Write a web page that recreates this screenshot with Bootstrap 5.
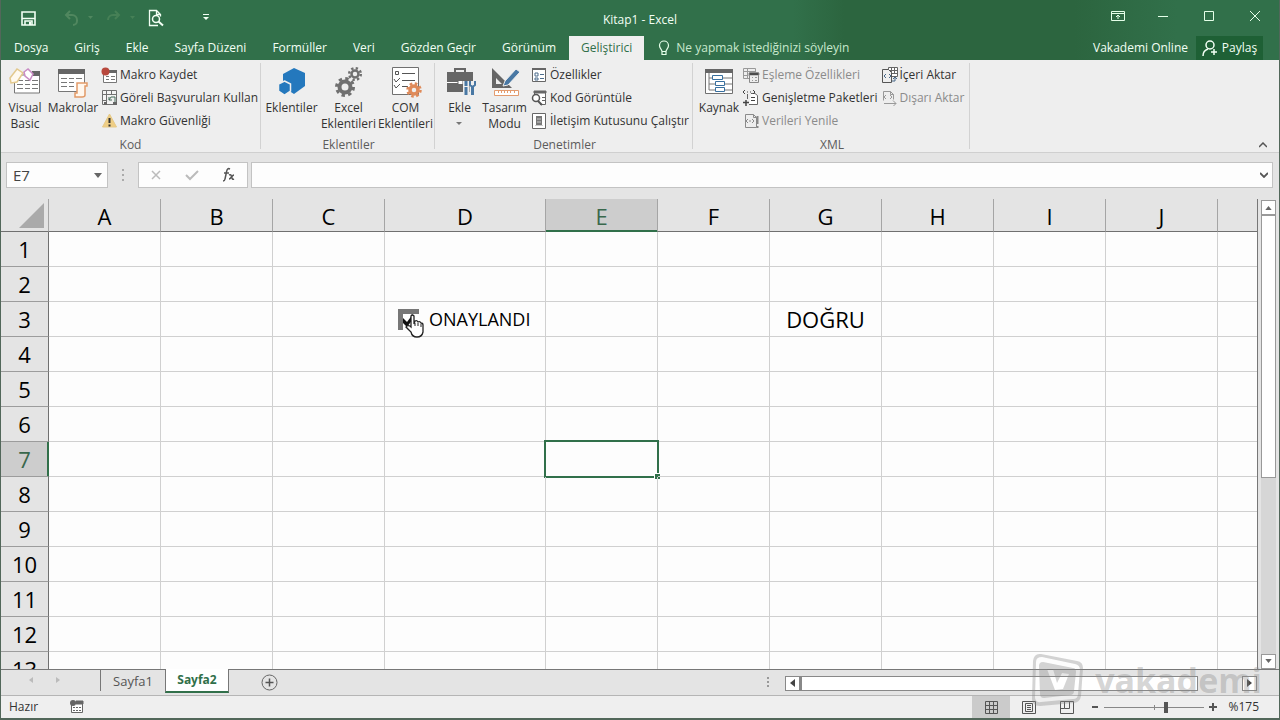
<!DOCTYPE html>
<html lang="tr">
<head>
<meta charset="utf-8">
<meta name="viewport" content="width=device-width, initial-scale=1">
<title>Kitap1 - Excel</title>
<link href="https://cdn.jsdelivr.net/npm/bootstrap@5.3.0/dist/css/bootstrap.min.css" rel="stylesheet">
<style>
:root{--green:#31704a;--line:#d0d0d0;--chrome:#e4e4e4}
body{font-family:"Open Sans","Noto Sans",sans-serif;font-size:12px;line-height:16px;color:#333;background:var(--chrome);height:100vh;overflow:hidden}
button{border:0;background:none;padding:0;color:inherit}
svg{display:block;flex:none}
.window{height:100vh;border:solid #52675a;border-width:0 1px 2px}
.titlebar{background:linear-gradient(90deg,#31704a 62%,#2c653f 66%,#2c653f 84%,#31704a 92%);color:#f2fff4}
.titlerow{height:36px;display:grid;grid-template-columns:1fr auto 1fr}
.quick{gap:28px;padding-left:20px}
.pull{margin-left:-16px}
.winbtns{gap:30px;padding-right:16px}
.menu{height:24px}
.menu-tab{height:24px;padding:0 13px}
.menu-tab.current{background:#efefef;color:var(--green);padding:0 12px}
.tell{gap:6px;padding-left:14px;color:#c8e8cd}
.share{background:#1e6035;height:24px;width:67px;gap:4px}
.ribbon{background:#eee;height:93px;border-bottom:1px solid #cfcfcf}
.group{border-right:1px solid #d2d2d2;padding:3px 0 0 2px;margin:3px 0}
.g-code{width:260px;padding-left:0}.g-addin{width:174px}.g-ctrl{width:258px}.g-xml{width:277px}
.group-body{height:72px;padding-bottom:2px}
.group-name{color:#5c5c5c;text-align:center;line-height:14px}
.big{width:48px;white-space:nowrap;gap:2px}
.big.wide{width:57px}.big.slim{width:45px}
.small-col{margin-left:4px}
.small-cmd{height:23px;gap:2px;padding-bottom:5px;white-space:nowrap}
.dim{color:#8b8b8b}
.formula{height:46px;padding:9px 6px 11px 5px}
.box{background:#fdfdfd;border:1px solid #c3c3c3;height:26px}
.namebox{width:102px}
.box input{border:0;background:transparent;outline:0;min-width:0;width:100%;color:#444;font-size:15px;line-height:20px;padding:0 6px}
.grip{width:30px}
.fx{width:110px;margin-right:3px}
.sheet{min-height:0}
.gridarea{overflow:hidden;min-width:0;border-right:1px solid #777;background:#fdfdfd}
.cells{table-layout:fixed;border-collapse:separate;border-spacing:0;width:100%;color:#000;font-size:22px;line-height:30px}
.cells th{background:var(--chrome);font-weight:400;text-align:center;padding:0}
.cells thead th{height:33px;line-height:30px;border-bottom:1px solid #707070;border-right:1px solid #a5a5a5;padding-top:2px}
.cells tbody th{height:35px;border-bottom:1px solid #9c9c9c;border-right:1px solid #707070}
.cells td{height:35px;padding:0;border-right:1px solid var(--line);border-bottom:1px solid var(--line);text-align:center;position:relative;white-space:nowrap}
.cells th:last-child,.cells td:last-child{border-right:0}
.cells thead th.on{background:#cdcdcd;color:#39684c;border-bottom-color:var(--green);box-shadow:inset 0 -1px var(--green)}
.cells tbody th.on{background:#cdcdcd;color:#39684c;border-right-color:var(--green);box-shadow:inset -1px 0 var(--green)}
.c-head{width:48px}.c-std{width:112px}.c-mid{width:161px}
.corner svg{margin:0 3px 0 auto}
.picked{position:absolute;inset:-2px;border:2px solid var(--green)}
.picked::after{content:"";position:absolute;right:-3px;bottom:-3px;width:6px;height:6px;background:var(--green);border:solid #fff;border-width:1px 0 0 1px}
.approve{padding-left:13px;font-size:18px;gap:10px;line-height:24px}
.approve input{appearance:none;width:21px;height:21px;margin:0;border:solid #777;border-width:5px 0 0 5px;background:#fff}
.tickbox{position:relative;display:flex}
.tickbox svg{position:absolute;left:4px;top:2px}
.vscroll{width:22px;padding:1px 3px 0 3px}
.sbtn{width:15px;height:15px;background:#fff;border:1px solid #999;display:grid;place-items:center}
.vtrack{background:#d6d6d6;width:15px}
.vthumb{background:#fff;border:1px solid #999;height:60%}
.tabs{height:28px;border-top:1px solid #777;border-bottom:1px solid #b5b5b5}
.sheet-nav{width:100px;gap:22px;border-right:1px solid #777;margin-bottom:4px;padding-right:12px}
.sheet-tab{width:64px;color:#555;font-size:13px;margin-bottom:2px}
.sheet-tab.current{background:#fff;color:var(--green);font-weight:700;font-size:12px;border:solid #777;border-width:0 1px;border-bottom:2px solid var(--green);margin-top:-1px}
.add{margin-left:32px}
.hscroll{width:472px;height:15px;margin:6px 22px 0 0}
.hscroll .sbtn{border-color:#888}
.hthumb{flex:0 1 398px;background:#fff;border:1px solid #888;border-left-width:2px}
.status{height:22px;background:#efefef}
.macro-ico{margin-left:32px}
.view{width:38px;height:22px;display:grid;place-items:center}
.view.current{background:#cbcbcb}
.zoomer{width:100px;height:16px;margin:0 4px}
.zoomer input{appearance:none;width:100%;height:16px;margin:0;background:linear-gradient(#888,#888) 0 8px/100% 1px no-repeat,linear-gradient(#888,#888) 50% 6px/1px 5px no-repeat;display:block}
.zoomer input::-webkit-slider-thumb{appearance:none;width:4px;height:11px;background:#555}
.percent{padding:0 20px 0 10px}
.brandmark{position:absolute;right:18px;bottom:13px;z-index:5;color:#8888885c;font-size:34px;line-height:28px;font-weight:700;gap:10px;pointer-events:none}
</style>
</head>
<body>
<svg width="0" height="0" class="position-absolute" aria-hidden="true">
  <symbol id="xmlfile" viewBox="0 0 16 16"><path d="M2.500 1.500h8l3 3v10h-11z" fill="none" stroke="currentColor"/><path d="M10.500 1.500v3h3M5 6L3 8l2 2m4-4 2 2-2 2M7 7v2" fill="none" stroke="currentColor"/></symbol>
</svg>
<div class="window d-flex flex-column">
  <header class="titlebar">
    <div class="titlerow">
      <div class="quick d-flex align-items-center">
        <button aria-label="Kaydet"><svg width="15" height="15" viewBox="0 0 15 15"><path d="M1 1h13v13H1z" fill="none" stroke="#f2fff4" stroke-width="1.600"/><path d="M1 7.500h13M4 14v-4h7v4" fill="none" stroke="#f2fff4" stroke-width="1.600"/><path d="M8 11h2v3H8z" fill="#f2fff4"/></svg></button>
        <button aria-label="Geri al"><svg width="30" height="16" viewBox="0 0 30 16"><path d="M6 1L2 5l4 4M2 5h6a5 5 0 0 1 5 5v1a4 4 0 0 1-4 4" fill="none" stroke="#50875f" stroke-width="2"/><path d="M24 6h5l-2.500 3z" fill="#50875f"/></svg></button>
        <button aria-label="Yinele" class="pull"><svg width="30" height="16" viewBox="0 0 30 16"><path d="M9 1l4 4-4 4m4-4H7a5 5 0 0 0-5 5" fill="none" stroke="#468056" stroke-width="2"/><path d="M24 6h5l-2.500 3z" fill="#468056"/></svg></button>
        <button aria-label="Baskı önizleme" class="pull"><svg width="16" height="18" viewBox="0 0 16 18"><path d="M10 16.500H1.500v-15h7l4 4v2M8.500 1.500v4h4" fill="none" stroke="#f2fff4" stroke-width="1.300"/><circle cx="8" cy="10" r="3.500" fill="none" stroke="#f2fff4" stroke-width="1.500"/><path d="M10.500 12.500l4.500 4" stroke="#f2fff4" stroke-width="2"/></svg></button>
        <button aria-label="Özelleştir"><svg width="28" height="8" viewBox="0 0 28 8"><path d="M11 .5h6" stroke="#f2fff4"/><path d="M11 3h6l-3 3z" fill="#f2fff4"/></svg></button>
      </div>
      <div class="align-self-center pt-1">Kitap1 - Excel</div>
      <div class="winbtns d-flex align-items-center justify-content-end pb-1">
        <button aria-label="Şerit"><svg width="14" height="12" viewBox="0 0 14 12"><path d="M.5 1.500h13v9H.5zM.5 3.500h13M7 9V5M5 7l2-2 2 2" fill="none" stroke="#e5ffe9"/></svg></button>
        <button aria-label="Küçült"><svg width="16" height="12" viewBox="0 0 16 12"><path d="M3 6.500h10" stroke="#e5ffe9"/></svg></button>
        <button aria-label="Ekranı kapla"><svg width="16" height="12" viewBox="0 0 16 12"><path d="M3.500 1.500h9v9h-9z" fill="none" stroke="#e5ffe9"/></svg></button>
        <button aria-label="Kapat"><svg width="16" height="12" viewBox="0 0 16 12"><path d="M3 1l10 10M13 1L3 11" stroke="#e5ffe9"/></svg></button>
      </div>
    </div>
    <nav class="menu d-flex align-items-center">
      <button class="menu-tab">Dosya</button><button class="menu-tab">Giriş</button><button class="menu-tab">Ekle</button><button class="menu-tab">Sayfa Düzeni</button><button class="menu-tab">Formüller</button><button class="menu-tab">Veri</button><button class="menu-tab">Gözden Geçir</button><button class="menu-tab">Görünüm</button><button class="menu-tab current">Geliştirici</button>
      <button class="tell d-flex align-items-center"><svg width="12" height="16" viewBox="0 0 12 16"><path d="M4 11.500c0-2-2.500-3-2.500-6a4.500 4.500 0 0 1 9 0c0 3-2.500 4-2.500 6zM4 12v2.500h4V12" fill="none" stroke="#e5ffe9" stroke-width="1.200"/></svg>Ne yapmak istediğinizi söyleyin</button>
      <span class="ms-auto me-2">Vakademi Online</span>
      <button class="share d-flex align-items-center justify-content-center me-3"><svg width="16" height="16" viewBox="0 0 16 16"><circle cx="8" cy="5" r="4" fill="none" stroke="#f2fff4" stroke-width="1.500"/><path d="M1 16c0-4 2-6 5-7M12 9v6M9 12h6" fill="none" stroke="#f2fff4" stroke-width="1.500"/></svg>Paylaş</button>
    </nav>
  </header>

  <section class="ribbon d-flex">
    <div class="group g-code">
      <div class="group-body d-flex">
        <button class="big d-flex flex-column align-items-center"><svg width="32" height="32" viewBox="0 0 32 32"><path d="M5.500 9h25v18h-25z" fill="#fff" stroke="#777"/><path d="M23 5h8v5h-8z" fill="#666"/><path d="M8 14.500h6m2 0h5m2 0h6M8 18.500h6m2 0h5m2 0h6M8 22.500h6m2 0h5m2 0h6" stroke="#777"/><path d="M1 12l7-9 6 4-6 9-6 1z" fill="#fffaf0" stroke="#e3c98e" stroke-width="1.500"/><path d="M15 6l4-3 5 5-3 6-5-4z" fill="#fff" stroke="#c98cc5" stroke-width="1.500"/></svg><span>Visual<br>Basic</span></button>
        <button class="big d-flex flex-column align-items-center"><svg width="32" height="32" viewBox="0 0 32 32"><path d="M1.500 3.500h26v22h-26z" fill="#fff" stroke="#777"/><path d="M1 3h27v5H1z" fill="#666"/><path d="M4 12.500h6m2 0h5m2 0h6M4 16.500h6m2 0h5M4 20.500h6m2 0h5" stroke="#777"/><path d="M20 17h10v3h-2v9c0 2-2 2-3 2h-7v-4h2z" fill="#fff7ee" stroke="#e29a68" stroke-width="1.500"/></svg><span>Makrolar</span></button>
        <div class="small-col">
          <button class="small-cmd d-flex align-items-center"><svg width="17" height="16" viewBox="0 0 17 16"><path d="M2.500 3.500h13v12h-13z" fill="#fff" stroke="#777"/><path d="M8 3h8v3H8z" fill="#666"/><path d="M5 9.500h3m2 0h4M5 12.500h3m2 0h4" stroke="#777"/><circle cx="4.500" cy="4.500" r="4" fill="#b8483d"/></svg>Makro Kaydet</button>
          <button class="small-cmd d-flex align-items-center"><svg width="17" height="16" viewBox="0 0 17 16"><path d="M1.500.5h14v14h-14zM1.500 4.500h14M1.500 10.500h14M5.500.5v14M10.500.5v4" fill="#f4f4f4" stroke="#707070"/><path d="M6 6h9v6H6z" fill="#eee"/><path d="M8 10l2-3h4v5M8 7v3h3" stroke="#466c5a" fill="none"/><path d="M3 12h3v3H3zm9 0h4v3h-4z" fill="#666"/></svg>Göreli Başvuruları Kullan</button>
          <button class="small-cmd d-flex align-items-center"><svg width="17" height="16" viewBox="0 0 17 16"><path d="M8.500 1L15.500 14H1.500z" fill="#efce85" stroke="#e6c987"/><path d="M8.500 5v5m0 1.500v2" stroke="#333" stroke-width="2"/></svg>Makro Güvenliği</button>
        </div>
      </div>
      <div class="group-name">Kod</div>
    </div>
    <div class="group g-addin">
      <div class="group-body d-flex">
        <button class="big wide d-flex flex-column align-items-center"><svg width="32" height="32" viewBox="0 0 32 32"><path d="M18 2l11 5v13l-11 8-11-7V8z" fill="#2478bd"/><path d="M8.500 15l6 3v7l-6 4-6-4v-7z" fill="#2478bd" stroke="#eee" stroke-width="1.500"/></svg><span>Eklentiler</span></button>
        <button class="big wide d-flex flex-column align-items-center"><svg width="32" height="32" viewBox="0 0 32 32"><g fill="none" stroke="#707070"><circle cx="12" cy="21" r="5.500" stroke-width="4"/><circle cx="12" cy="21" r="8.500" stroke-width="3" stroke-dasharray="3.400 3.276"/><circle cx="22" cy="8" r="3.500" stroke-width="2.500"/><circle cx="22" cy="8" r="5.800" stroke-width="2.500" stroke-dasharray="2.300 2.255"/></g></svg><span>Excel<br>Eklentileri</span></button>
        <button class="big wide d-flex flex-column align-items-center"><svg width="32" height="32" viewBox="0 0 32 32"><path d="M2.500 1.500h26v27h-26z" fill="#fff" stroke="#707070"/><path d="M5.500 5.500h3v3h-3zM12 7.500h13M12 14.500h13M12 20.500h6M4 13l2 3 4-4M4 19l2 3 4-4" fill="none" stroke="#555"/><circle cx="24" cy="24" r="4" fill="#eee" stroke="#df8a59" stroke-width="3.500"/><circle cx="24" cy="24" r="6.500" fill="none" stroke="#df8a59" stroke-width="2.500" stroke-dasharray="2.600 2.505"/></svg><span>COM<br>Eklentileri</span></button>
      </div>
      <div class="group-name">Eklentiler</div>
    </div>
    <div class="group g-ctrl">
      <div class="group-body d-flex">
        <button class="big slim d-flex flex-column align-items-center"><svg width="32" height="32" viewBox="0 0 32 32"><path d="M11 7V3h10v4" fill="none" stroke="#666" stroke-width="2"/><path d="M3 6h26v10H3zM3 17h26v9H3z" fill="#666"/><path d="M3 16.500h26" stroke="#fff"/><path d="M14 14.500h5v4h-5z" fill="#fff" stroke="#666"/><path d="M22 15v15M28.500 15v15" stroke="#eee" stroke-width="6"/><path d="M22 15v5m0 1v8M28.500 21v8" stroke="#4978a4" stroke-width="3"/><path d="M26 15v4l2.500 2 2.500-2v-4" fill="none" stroke="#4978a4" stroke-width="2"/></svg><span>Ekle</span><svg width="7" height="4" viewBox="0 0 7 4" class="mt-1"><path d="M0 0h6L3 3z" fill="#777"/></svg></button>
        <button class="big slim d-flex flex-column align-items-center"><svg width="32" height="32" viewBox="0 0 32 32"><path fill-rule="evenodd" d="M3 2l20 20H3zM7 12v6h6z" fill="#666"/><path d="M14 20l2-5L27 3l4 3-12 13z" fill="#4978a4" stroke="#eee"/><path d="M5.500 24.500h24v5h-24z" fill="#fff" stroke="#e39b6e"/><path d="M9.500 25v2m3-2v2m3-2v2m3-2v2m3-2v2m4-2v2" stroke="#e39b6e"/></svg><span>Tasarım<br>Modu</span></button>
        <div class="small-col">
          <button class="small-cmd d-flex align-items-center"><svg width="17" height="16" viewBox="0 0 17 16"><path d="M1.500 1.500h13v13h-13z" fill="#fff" stroke="#666"/><path d="M1 1h14v2H1z" fill="#666"/><path d="M4 6h3v3H4zM4 11h3v2H4zM9 7.500h4M9 11.500h4" stroke="#4d6d8c" fill="none"/></svg>Özellikler</button>
          <button class="small-cmd d-flex align-items-center"><svg width="17" height="16" viewBox="0 0 17 16"><path d="M3.500 5V1.500h11v13H9" fill="#fff" stroke="#666"/><path d="M3 1h12v2H3zM11 7.500h3M11 10.500h3" stroke="#666" fill="#666"/><circle cx="5" cy="8" r="3.500" fill="#fff" stroke="#555" stroke-width="1.500"/><path d="M7 11l4 4" stroke="#555" stroke-width="2"/></svg>Kod Görüntüle</button>
          <button class="small-cmd d-flex align-items-center"><svg width="17" height="16" viewBox="0 0 17 16"><path d="M1.500.5h13v15h-13z" fill="#fff" stroke="#666"/><path d="M5 3h6v9H5z" fill="#777"/><path d="M6 6h4M6 9h4M4 12.500h8" stroke="#ccc"/></svg>İletişim Kutusunu Çalıştır</button>
        </div>
      </div>
      <div class="group-name">Denetimler</div>
    </div>
    <div class="group g-xml">
      <div class="group-body d-flex">
        <button class="big d-flex flex-column align-items-center"><svg width="32" height="32" viewBox="0 0 32 32"><path d="M2.500 3.500h27v24h-27z" fill="#fff" stroke="#707070"/><path d="M2 3h28v4H2z" fill="#666"/><path d="M6 7v17M6 12h4M6 18h6M6 24h6M20 12h9M22 18h7M22 24h7" stroke="#777"/><path d="M9.500 9.500h10v4h-10zM12.500 15.500h9v4h-9zM12.500 21.500h9v4h-9z" fill="#fff" stroke="#386f9f"/></svg><span>Kaynak</span></button>
        <div class="small-col ms-0">
          <button class="small-cmd d-flex align-items-center dim"><svg width="17" height="16" viewBox="0 0 17 16"><path d="M.5 1.500h12v10H.5zM.5 4.500h12M4.500 1.500v10M.5 8.500h5" fill="none" stroke="#999"/><path d="M6.500 5.500h9v10h-9z" fill="#eee" stroke="#888"/><path d="M6 6h10v2H6zM9 10.500h1m2 0h2M9 13.500h1m2 0h2" stroke="#999"/></svg>Eşleme Özellikleri</button>
          <button class="small-cmd d-flex align-items-center"><svg width="17" height="16" viewBox="0 0 17 16"><path d="M4.500 4v5M6 14.500h8.500v-9L12 3.500H8" fill="#fff" stroke="#666"/><path d="M2 0L0 2l2 2m8-4l2 2-2 2M4 2h1m2 0h1M8 7.500h4m-4 3h4" fill="none" stroke="#444"/><path d="M0 12.500h6M3 10v6" stroke="#444" stroke-width="1.500"/></svg>Genişletme Paketleri</button>
          <button class="small-cmd d-flex align-items-center dim"><svg width="17" height="16" viewBox="0 0 17 16"><use href="#xmlfile" width="16" height="16"/><path d="M14.500 3v8m0 2v2" stroke="#888" stroke-width="2"/></svg>Verileri Yenile</button>
        </div>
        <div class="small-col">
          <button class="small-cmd d-flex align-items-center"><svg width="16" height="16" viewBox="0 0 16 16"><path d="M6.500.5h9v9h-9zM6 3.500h9M9.500.5v6M12.500.5v6M6 6.500h9" fill="#fff" stroke="#666"/><path d="M.5 2.500h6l3 3v10h-9z" fill="#eee" stroke="#555"/><path d="M4 7L2 9l2 2m3-4l2 2-2 2M10 14h3v-4m-2 2l2-2 2 2" fill="none" stroke="#486889"/></svg>İçeri Aktar</button>
          <button class="small-cmd d-flex align-items-center dim"><svg width="16" height="16" viewBox="0 0 16 16"><path d="M1.500 10.500v-9h7l3 3v5M8.500 1.500v3h3M4 5L2 7l2 2m4-4l2 2-2 2M2 13.500h12m-3-3l3 3-3 3" fill="none" stroke="#999"/></svg>Dışarı Aktar</button>
        </div>
      </div>
      <div class="group-name">XML</div>
    </div>
    <button class="ms-auto align-self-end me-2 pe-1 pb-1" aria-label="Şeridi daralt"><svg width="8" height="6" viewBox="0 0 8 6"><path d="M0 5l4-4 4 4" fill="none" stroke="#555" stroke-width="1.500"/></svg></button>
  </section>

  <div class="formula d-flex align-items-center">
    <div class="box namebox d-flex align-items-center pe-1"><input aria-label="Ad kutusu" value="E7"><svg width="9" height="5" viewBox="0 0 9 5"><path d="M0 0h8L4 5z" fill="#666"/></svg></div>
    <div class="grip d-grid justify-content-center"><svg width="2" height="12" viewBox="0 0 2 12"><path d="M0 0h2v2H0zm0 5h2v2H0zm0 5h2v2H0z" fill="#aaa"/></svg></div>
    <div class="box fx d-flex align-items-center justify-content-around">
      <button aria-label="İptal"><svg width="12" height="12" viewBox="0 0 12 12"><path d="M2 2l8 8M10 2l-8 8" stroke="#bbb" stroke-width="1.500"/></svg></button>
      <button aria-label="Gir"><svg width="14" height="12" viewBox="0 0 14 12"><path d="M1 6l4 4 8-8" fill="none" stroke="#bbb" stroke-width="2"/></svg></button>
      <button aria-label="İşlev ekle"><svg width="14" height="16" viewBox="0 0 14 16"><path d="M8 2c-2-1-3 0-3.500 3L3 12c-.3 2-1 2-2 2M2 6h5M7 8c2-1 2 0 3 3 .5 1.500 1 1.500 2 1M12 8c-2 0-3 4-5 4" fill="none" stroke="#555" stroke-width="1.500"/></svg></button>
    </div>
    <div class="box flex-fill d-flex align-items-center pe-1"><input aria-label="Formül çubuğu"><svg width="8" height="6" viewBox="0 0 8 6"><path d="M0 1l4 4 4-4" fill="none" stroke="#555" stroke-width="1.800"/></svg></div>
  </div>

  <main class="sheet flex-fill d-flex">
    <div class="gridarea flex-fill">
      <table class="cells">
        <colgroup><col class="c-head"><col class="c-std"><col class="c-std"><col class="c-std"><col class="c-mid"><col class="c-std"><col class="c-std"><col class="c-std"><col class="c-std"><col class="c-std"><col class="c-std"><col></colgroup>
        <thead><tr><th class="corner"><svg width="26" height="26" viewBox="0 0 26 26"><path d="M25 0v25H0z" fill="#aaa"/></svg></th><th>A</th><th>B</th><th>C</th><th>D</th><th class="on">E</th><th>F</th><th>G</th><th>H</th><th>I</th><th>J</th><th></th></tr></thead>
        <tbody id="rows"></tbody>
      </table>
    </div>
    <div class="vscroll d-flex flex-column">
      <button class="sbtn" aria-label="Yukarı"><svg width="7" height="4" viewBox="0 0 8 5"><path d="M0 5h8L4 0z" fill="#666"/></svg></button>
      <div class="vtrack flex-fill"><div class="vthumb"></div></div>
      <button class="sbtn" aria-label="Aşağı"><svg width="7" height="4" viewBox="0 0 8 5"><path d="M0 0h8L4 5z" fill="#666"/></svg></button>
    </div>
  </main>

  <div class="tabs d-flex">
    <div class="sheet-nav d-flex align-items-center justify-content-center"><svg width="5" height="6" viewBox="0 0 5 6"><path d="M4 0v6L0 3z" fill="#bbb"/></svg><svg width="5" height="6" viewBox="0 0 5 6"><path d="M0 0v6l4-3z" fill="#bbb"/></svg></div>
    <button class="sheet-tab">Sayfa1</button><button class="sheet-tab current">Sayfa2</button>
    <button class="add" aria-label="Yeni sayfa"><svg width="17" height="17" viewBox="0 0 17 17"><circle cx="8.500" cy="8.500" r="7.500" fill="none" stroke="#666"/><path d="M8.500 4.500v8M4.500 8.500h8" stroke="#555" stroke-width="1.500"/></svg></button>
    <svg width="2" height="12" viewBox="0 0 2 12" class="ms-auto me-3 align-self-center"><path d="M0 1h2v2H0zm0 4h2v2H0zm0 4h2v2H0z" fill="#999"/></svg>
    <div class="hscroll d-flex justify-content-between"><button class="sbtn" aria-label="Sola"><svg width="5" height="8" viewBox="0 0 5 8"><path d="M5 0v8L0 4z" fill="#444"/></svg></button><div class="hthumb me-auto"></div><button class="sbtn" aria-label="Sağa"><svg width="5" height="8" viewBox="0 0 5 8"><path d="M0 0v8l5-4z" fill="#444"/></svg></button></div>
  </div>

  <footer class="status d-flex align-items-center">
    <span class="ps-2">Hazır</span>
    <svg width="14" height="14" viewBox="0 0 14 14" class="macro-ico"><path d="M1.500 3.500h11v9h-11z" fill="#fff" stroke="#666"/><path d="M6 1h7v3H6zM3 7.500h2m1 0h2m1 0h2M3 10.500h2m1 0h2m1 0h2" stroke="#666" fill="#666"/><circle cx="3" cy="3" r="3" fill="#666"/></svg>
    <div class="ms-auto d-flex align-items-center">
      <button class="view current" aria-label="Normal"><svg width="13" height="13" viewBox="0 0 13 13"><path d="M.5.5h12v12H.5zM.5 4.500h12M.5 8.500h12M4.500.5v12M8.500.5v12" fill="none" stroke="#555"/></svg></button>
      <button class="view" aria-label="Sayfa düzeni"><svg width="14" height="13" viewBox="0 0 14 13"><path d="M.5.5h13v12H.5zM3.500 2.500h7v8h-7zM5 4.500h4M5 6.500h4M5 8.500h4" fill="none" stroke="#555"/></svg></button>
      <button class="view" aria-label="Sayfa sonu"><svg width="14" height="13" viewBox="0 0 14 13"><path d="M.5.5h13v12H.5zM4.500.5v7h5v-7M.5 7.500h4" fill="none" stroke="#555"/></svg></button>
      <button aria-label="Uzaklaştır" class="ms-1"><svg width="10" height="10" viewBox="0 0 10 10"><path d="M2 5h6" stroke="#555" stroke-width="2"/></svg></button>
      <div class="zoomer"><input type="range" aria-label="Yakınlaştırma" min="0" max="100" value="62"></div>
      <button aria-label="Yakınlaştır"><svg width="10" height="10" viewBox="0 0 10 10"><path d="M1 5h8M5 1v8" stroke="#555" stroke-width="2"/></svg></button>
      <span class="percent">%175</span>
    </div>
  </footer>
</div>
<div class="brandmark d-flex align-items-center"><svg width="54" height="54" viewBox="0 0 54 54"><path fill-rule="evenodd" fill="currentColor" d="M10 1l36 7q6 1 6 7l-2 28q-1 6-7 7l-34 3q-8 0-8-7L2 8q1-8 8-7zM11 4Q5 4 5 9L4 44q0 6 6 5l32-3q5 0 5-5l2-24q0-5-5-6zM12 9l30 6q3 0 3 4l-2 19q0 4-4 4l-26 3q-4 0-4-4L8 13q0-4 4-4zM16 16l8 21 8-1 6-15-7-1-5 10-4-14z"/></svg><span>vakademi</span></div>
<script src="https://cdn.jsdelivr.net/npm/bootstrap@5.3.0/dist/js/bootstrap.bundle.min.js"></script>
<script>
const content = {
  "3-3": '<label class="approve d-flex align-items-center"><span class="tickbox"><input type="checkbox" checked><svg width="26" height="30" viewBox="0 0 26 30"><path d="M1 7l4 4 6-8v5l-6 8-4-4z" fill="#111"/><path d="M9 5q1-2 3 0v8l1-3q2-1 3 1 2-1 3 1 2 0 2 2v7q-1 5-6 5-5 0-6-5l-5-5q1-2 4-1l1 1z" fill="#fff" stroke="#222" stroke-width="1.300"/><path d="M13 12v3m3-3v3m3-2v3" stroke="#222"/></svg></span>ONAYLANDI</label>',
  "3-6": "DOĞRU",
  "7-4": '<span class="picked"></span>'
};
let html = "";
for (let r = 1; r <= 13; r++) {
  html += `<tr><th${r === 7 ? ' class="on"' : ""}>${r}</th>`;
  for (let c = 0; c < 11; c++) html += `<td>${content[r + "-" + c] || ""}</td>`;
  html += "</tr>";
}
document.getElementById("rows").innerHTML = html;
</script>
</body>
</html>
